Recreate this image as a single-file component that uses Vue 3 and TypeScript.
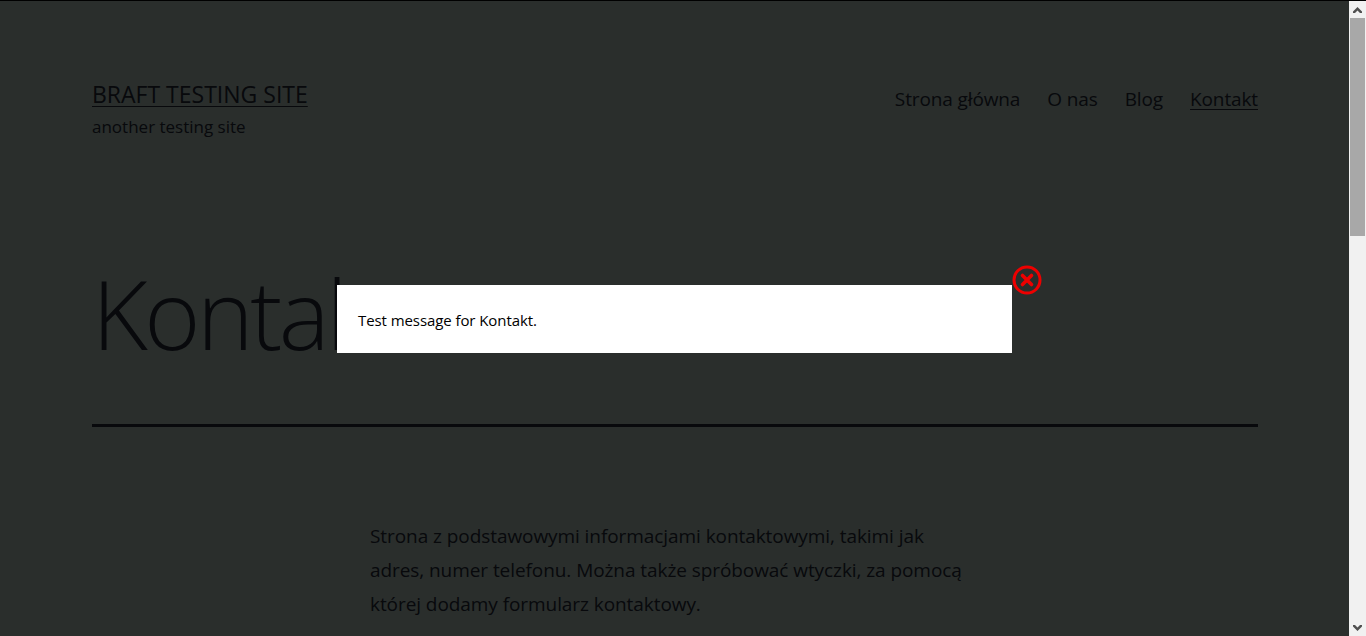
<script setup lang="ts">
const navItems: { label: string; current?: boolean }[] = [
  { label: 'Strona główna' },
  { label: 'O nas' },
  { label: 'Blog' },
  { label: 'Kontakt', current: true },
]
</script>

<template>
  <div class="window">
    <div class="viewport">
      <div class="page">
        <header class="site-header">
          <div class="branding">
            <a class="site-title">BRAFT TESTING SITE</a>
            <p class="tagline">another testing site</p>
          </div>
          <nav class="nav">
            <a v-for="item in navItems" :key="item.label" :class="{ current: item.current }">{{ item.label }}</a>
          </nav>
        </header>
        <h1 class="title">Kontakt</h1>
        <hr class="rule" />
        <div class="content">
          <p>Strona z podstawowymi informacjami kontaktowymi, takimi jak adres, numer telefonu. Można także spróbować wtyczki, za pomocą której dodamy formularz kontaktowy.</p>
        </div>
      </div>
      <div class="overlay">
        <div class="modal">
          <p>Test message for Kontakt.</p>
          <svg class="close" width="30" height="30" viewBox="0 0 30 30" aria-label="Zamknij">
            <circle cx="15" cy="15" r="13" fill="none" stroke="#ee0000" stroke-width="3" />
            <path d="M10.5 10.5 19.5 19.5M19.5 10.5 10.5 19.5" fill="none" stroke="#ee0000" stroke-width="3.6" stroke-linecap="round" />
          </svg>
        </div>
      </div>
    </div>
    <aside class="scrollbar">
      <div class="arrow">
        <svg width="9" height="6" viewBox="0 0 9 6"><path d="M0 4.5 4.5 0 9 4.5V6H7L4.5 3.5 2 6H0Z" fill="#505050" /></svg>
      </div>
      <div class="track"><div class="thumb"></div></div>
      <div class="arrow">
        <svg width="9" height="6" viewBox="0 0 9 6"><path d="M0 1.5 4.5 6 9 1.5V0H7L4.5 2.5 2 0H0Z" fill="#505050" /></svg>
      </div>
    </aside>
  </div>
</template>

<style scoped>
.window {
  display: flex;
  width: 1366px;
  height: 636px;
  overflow: hidden;
  font-family: "Open Sans", "Noto Sans", sans-serif;
}
.viewport {
  position: relative;
  flex: 1;
  min-width: 0;
  overflow: hidden;
  background: #d1e4dd;
  color: #28303d;
}
.page {
  padding: 80px 91px 0 92px;
}
.site-header {
  display: flex;
  justify-content: space-between;
  align-items: flex-start;
}
.site-title {
  display: block;
  font-size: 23px;
  line-height: 29px;
  text-decoration: underline;
  text-decoration-thickness: 1px;
  text-underline-offset: 3px;
  font-weight: 400;
}
.tagline {
  margin: 7px 0 0;
  font-size: 17px;
  line-height: 22px;
  font-weight: 400;
}
.nav {
  display: flex;
  gap: 27px;
  margin-top: 6px;
  font-size: 19px;
  line-height: 26px;
  font-weight: 400;
  letter-spacing: -0.12px;
}
.nav .current {
  text-decoration: underline;
  text-decoration-thickness: 1px;
  text-underline-offset: 3px;
}
.title {
  margin: 117px 0 0;
  font-size: 96px;
  line-height: 116px;
  font-weight: 300;
  letter-spacing: -3.5px;
}
.rule {
  margin: 53px 0 0;
  border: 0;
  height: 3px;
  background: #28303d;
}
.content {
  width: 610px;
  margin: 92px auto 0;
  font-size: 19px;
  line-height: 34px;
  font-weight: 400;
  letter-spacing: -0.07px;
}
.content p {
  margin: 0;
  max-width: 600px;
}
.overlay {
  position: absolute;
  inset: 0;
  border-top: 1px solid #000;
  background: rgba(0, 0, 0, 0.8);
}
.modal {
  position: absolute;
  left: 337px;
  top: 284px;
  width: 675px;
  height: 68px;
  box-sizing: border-box;
  padding: 25px 21px;
  background: #fff;
  color: #000;
  font-size: 15px;
  line-height: 20px;
  letter-spacing: -0.08px;
}
.modal p {
  margin: 0;
}
.close {
  position: absolute;
  right: -30px;
  top: -20px;
}
.scrollbar {
  display: flex;
  flex-direction: column;
  width: 17px;
  background: #f1f1f1;
  border-top: 1px solid #000;
  box-sizing: border-box;
}
.arrow {
  display: flex;
  align-items: center;
  justify-content: center;
  height: 17px;
}
.track {
  flex: 1;
}
.thumb {
  height: 218px;
  margin: 0 1px 0 1px;
  background: #a8a8a8;
}
</style>
